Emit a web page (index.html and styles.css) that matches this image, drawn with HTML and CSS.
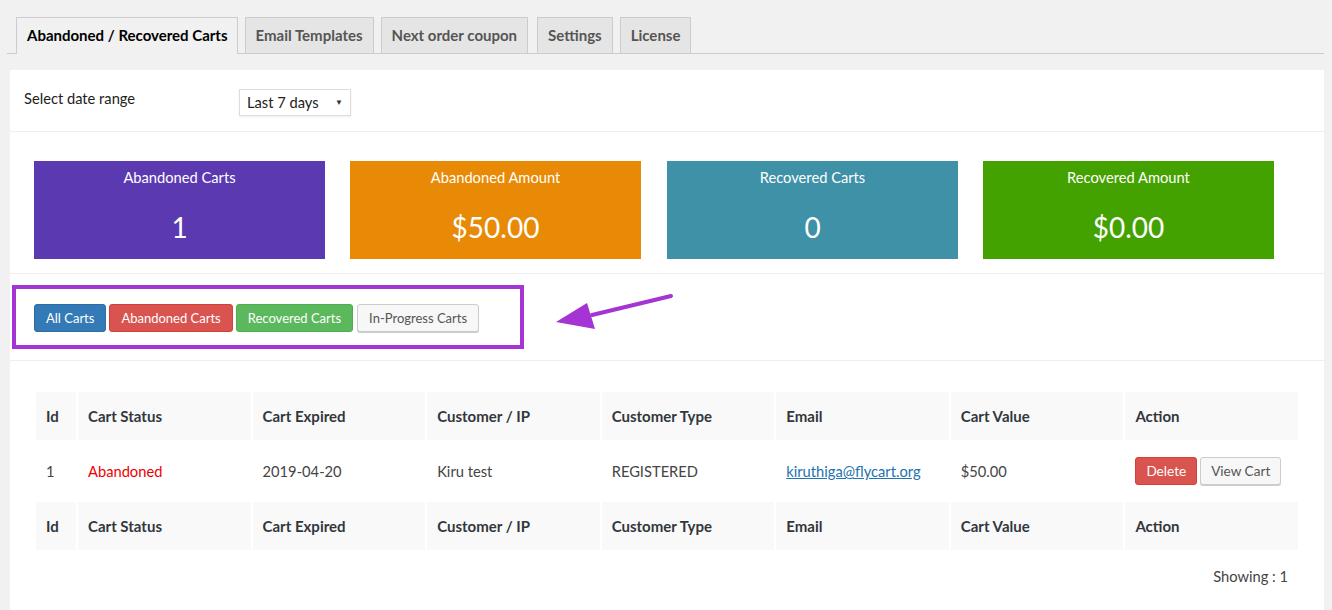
FILE: index.html
```html
<!DOCTYPE html>
<html>
<head>
<meta charset="utf-8">
<link rel="stylesheet" href="styles.css">
</head>
<body>
<div class="wrap">
  <nav class="tabs">
    <a class="tab active">Abandoned / Recovered Carts</a>
    <a class="tab">Email Templates</a>
    <a class="tab">Next order coupon</a>
    <a class="tab">Settings</a>
    <a class="tab">License</a>
  </nav>
  <div class="panel">
    <div class="range-row">
      <span class="range-label">Select date range</span>
      <div class="select">Last 7 days <span class="caret">▼</span></div>
    </div>
    <div class="stats">
      <div class="stat purple"><div class="stat-title">Abandoned Carts</div><div class="stat-value">1</div></div>
      <div class="stat orange"><div class="stat-title">Abandoned Amount</div><div class="stat-value">$50.00</div></div>
      <div class="stat teal"><div class="stat-title">Recovered Carts</div><div class="stat-value">0</div></div>
      <div class="stat green"><div class="stat-title">Recovered Amount</div><div class="stat-value">$0.00</div></div>
    </div>
    <div class="filter-row">
      <div class="filter-box">
        <button class="btn btn-blue">All Carts</button>
        <button class="btn btn-red">Abandoned Carts</button>
        <button class="btn btn-green">Recovered Carts</button>
        <button class="btn btn-default">In-Progress Carts</button>
      </div>
      <svg class="arrow" width="130" height="40" viewBox="0 0 130 40">
        <line x1="117" y1="4" x2="38" y2="23" stroke="#a434d4" stroke-width="4" stroke-linecap="round"/>
        <polygon points="2,30 33,11 41,37" fill="#a434d4"/>
      </svg>
    </div>
    <div class="table-wrap">
      <table class="carts">
        <thead>
          <tr><th class="c-id">Id</th><th>Cart Status</th><th>Cart Expired</th><th>Customer / IP</th><th>Customer Type</th><th>Email</th><th>Cart Value</th><th>Action</th></tr>
        </thead>
        <tbody>
          <tr>
            <td>1</td>
            <td class="status-ab">Abandoned</td>
            <td>2019-04-20</td>
            <td>Kiru test</td>
            <td>REGISTERED</td>
            <td><a class="mail">kiruthiga@flycart.org</a></td>
            <td>$50.00</td>
            <td class="actions"><button class="btn btn-red">Delete</button><button class="btn btn-default">View Cart</button></td>
          </tr>
        </tbody>
        <tfoot>
          <tr><th class="c-id">Id</th><th>Cart Status</th><th>Cart Expired</th><th>Customer / IP</th><th>Customer Type</th><th>Email</th><th>Cart Value</th><th>Action</th></tr>
        </tfoot>
      </table>
      <div class="showing">Showing : 1</div>
    </div>
  </div>
</div>
</body>
</html>
```

FILE: styles.css
```css
* { box-sizing: border-box; }
html, body { margin: 0; padding: 0; }
body {
  background: #f1f1f1;
  font-family: Lato, "Liberation Sans", sans-serif;
  font-size: 14.7px;
  color: #444;
  width: 1332px;
  height: 610px;
  overflow: hidden;
}
.wrap { padding: 17px 8px 0 10px; }
.tabs {
  display: flex;
  gap: 7px;
  padding-left: 9px;
  border-bottom: 1px solid #ccc;
  margin-left: -3px;
  height: 37px;
}
.tab {
  display: block;
  height: 36px;
  line-height: 35px;
  padding: 0 10px;
  font-size: 15px;
  font-weight: 700;
  color: #555;
  background: #e5e5e5;
  border: 1px solid #ccc;
  border-bottom: none;
}
.tab.active {
  background: #f1f1f1;
  color: #000;
  height: 37px;
  padding: 0 9px 0 10px;
}
.tab:nth-child(4) { margin-left: 2px; }
.panel {
  margin-top: 16px;
  background: #fff;
  width: 1314px;
  height: 540px;
}
.range-row {
  display: flex;
  align-items: center;
  height: 62px;
  padding: 0 14px;
  border-bottom: 1px solid #eee;
}
.range-label { width: 215px; color: #222; margin-top: -5px; }
.select {
  width: 112px;
  height: 27px;
  border: 1px solid #ddd;
  box-shadow: 0 1px 2px rgba(0,0,0,0.07);
  color: #222;
  padding: 4px 7px;
  display: flex;
  justify-content: space-between;
  align-items: center;
  margin-top: 3px;
}
.caret { font-size: 8px; color: #333; }
.stats {
  display: flex;
  gap: 25px;
  padding: 29px 24px 14px;
  border-bottom: 1px solid #eee;
}
.stat {
  width: 291px;
  height: 98px;
  color: #fff;
  text-align: center;
}
.stat:nth-child(3) { margin-left: 1px; }
.stat-title { padding-top: 7px; line-height: 18px; }
.stat-value { font-size: 28px; margin-top: 24px; line-height: 34px; }
.purple { background: #5b3ab1; }
.orange { background: #e88a06; }
.teal { background: #3e91a6; }
.green { background: #44a200; }
.filter-row {
  display: flex;
  align-items: flex-start;
  height: 87px;
  padding: 11px 0 0 2px;
  border-bottom: 1px solid #eee;
}
.filter-box {
  width: 512px;
  height: 64px;
  border: 4px solid #a434d4;
  display: flex;
  align-items: center;
  gap: 3px;
  padding: 2px 0 0 18px;
}
.arrow { margin-left: 30px; margin-top: 7px; }
.btn {
  font-family: inherit;
  font-size: 13px;
  height: 28px;
  padding: 0 11px;
  border: 1px solid #ccc;
  border-radius: 3px;
  color: #fff;
  cursor: pointer;
}
.btn-blue { background: #337ab7; border-color: #2e6da4; }
.btn-red { background: #d9534f; border-color: #d43f3a; }
.btn-green { background: #5cb85c; border-color: #4cae4c; }
.btn-default { background: #f7f7f7; border-color: #ccc; color: #555; box-shadow: 0 1px 0 #ccc; }
.filter-box .btn-default { margin-left: 1px; }
.table-wrap { padding: 29px 24px 0 26px; }
.carts {
  width: 1266px;
  border-spacing: 2px;
  margin-left: -2px;
  table-layout: fixed;
}
.carts th {
  background: #f9f9f9;
  text-align: left;
  font-weight: 700;
  height: 48px;
  padding: 0 10px;
  color: #32373c;
  font-size: 15px;
}
.carts th.c-id { width: 40px; }
.carts td {
  height: 58px;
  padding: 0 10px;
  color: #444;
}
.carts td.status-ab { color: #e00; }
.mail { color: #2271b1; text-decoration: underline; }
.actions .btn { height: 28px; font-size: 13.6px; padding: 0 10px; }
.actions .btn + .btn { margin-left: 3px; }
.showing { text-align: right; padding-right: 12px; margin-top: 15px; color: #444; }
```
